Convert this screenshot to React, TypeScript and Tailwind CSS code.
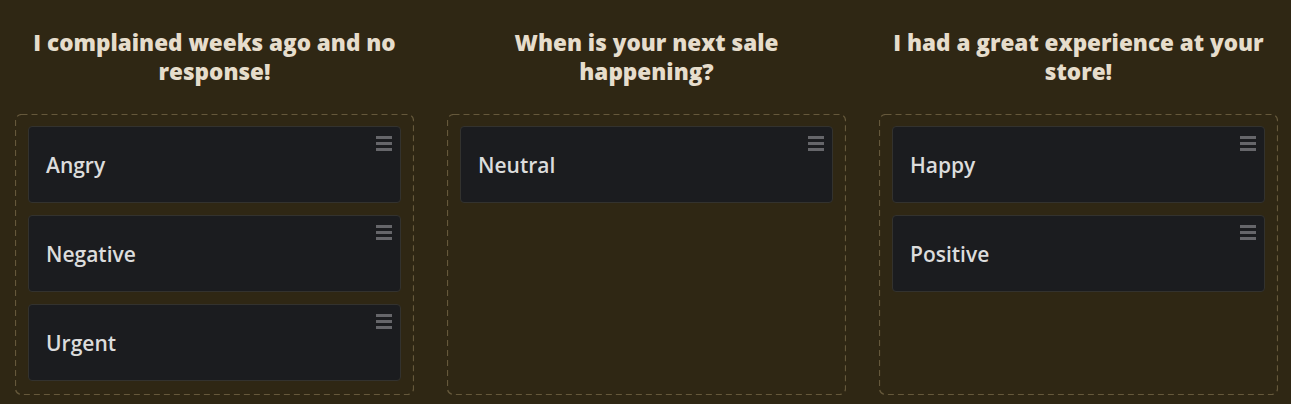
const columns = [
  { title: 'I complained weeks ago and no response!', items: ['Angry', 'Negative', 'Urgent'] },
  { title: 'When is your next sale happening?', items: ['Neutral'] },
  { title: 'I had a great experience at your store!', items: ['Happy', 'Positive'] },
];

const Grip = () => (
  <div className="absolute right-[8px] top-[9px] flex w-4 flex-col gap-[3px]">
    <span className="h-[3px] w-4 bg-[#66666a]" />
    <span className="h-[3px] w-4 bg-[#66666a]" />
    <span className="h-[3px] w-4 bg-[#66666a]" />
  </div>
);

// dashed outline drawn with svg so the dash length matches (6 on / 4 off)
const DashedFrame = () => (
  <svg className="pointer-events-none absolute inset-0 h-full w-full" preserveAspectRatio="none">
    <rect x="0.5" y="0.5" width="calc(100% - 1px)" height="calc(100% - 1px)" rx="6" fill="none" stroke="#65583b" strokeWidth="1.2" strokeDasharray="6 4" />
  </svg>
);

export default function App() {
  return (
    <div className="h-[404px] w-[1291px] overflow-hidden bg-[#2f2714] pl-[15px] pr-[13px] font-['Open_Sans',sans-serif]">
      <div className="grid h-full grid-cols-3 gap-[33px]">
        {columns.map((col) => (
          <div key={col.title} className="flex flex-col pb-[9px]">
            <h2 className="mx-auto mt-[28px] h-[58px] max-w-[380px] text-center text-[22.5px] font-extrabold leading-[29px] text-[#e6ddcc]">
              {col.title}
            </h2>
            <div className="relative mt-[28px] flex flex-1 flex-col gap-[12px] px-[13px] pb-[13px] pt-[12px]">
              <DashedFrame />
              {col.items.map((item) => (
                <div
                  key={item}
                  className="relative flex h-[77px] shrink-0 items-center rounded-[4px] border border-[#33322e] bg-[#1b1c1f] pl-[17px] pt-[2px] text-[21px] font-semibold text-[#dcdcdc]"
                >
                  {item}
                  <Grip />
                </div>
              ))}
            </div>
          </div>
        ))}
      </div>
    </div>
  );
}
